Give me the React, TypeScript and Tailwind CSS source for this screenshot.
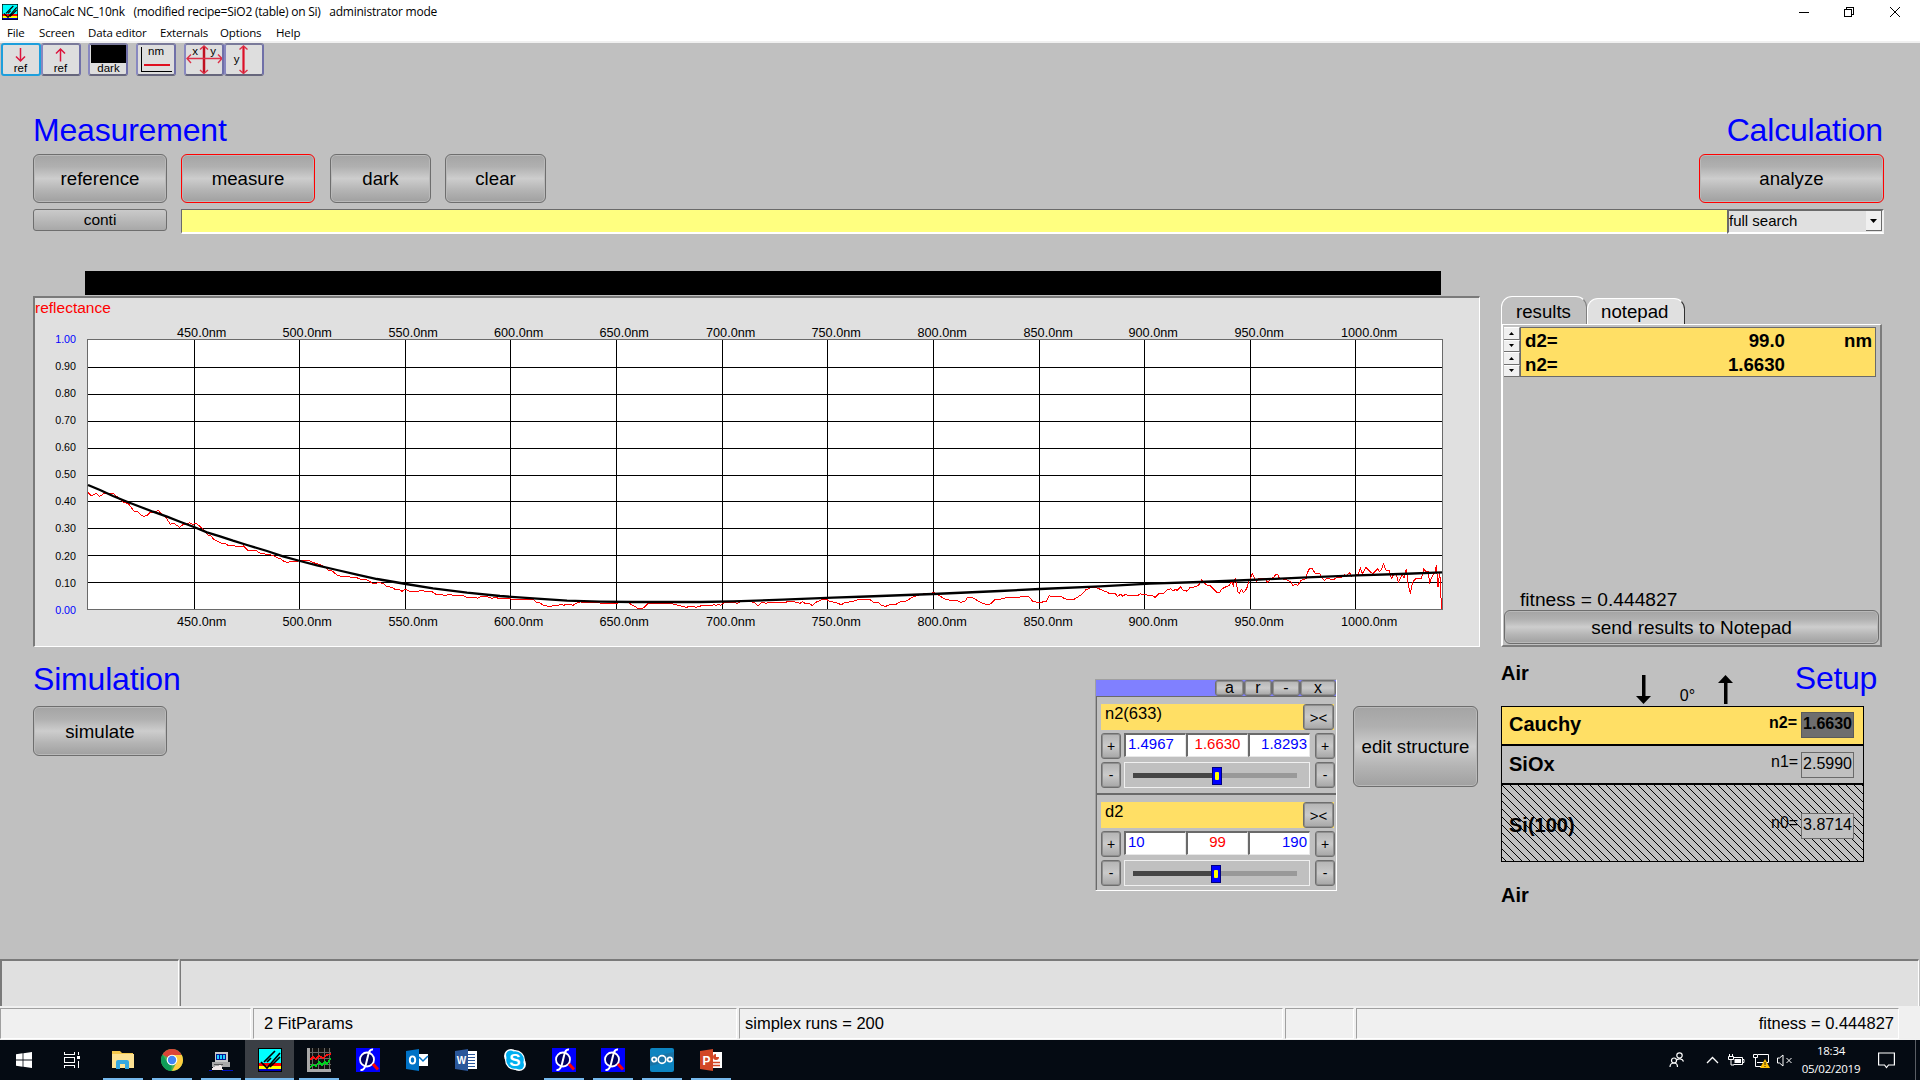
import React from "react";

const ARIAL = "font-['Liberation_Sans',Arial,sans-serif]";
const SEGOE = "font-['Open_Sans','Noto_Sans',sans-serif]";

type BtnProps = { children: React.ReactNode; className: string; red?: boolean };

/* Large beveled command button */
function Btn({ children, className, red }: BtnProps) {
  return (
    <button
      className={
        "flex shrink-0 items-center justify-center rounded-[6px] border bg-[linear-gradient(to_bottom,#a4a4a4_0%,#b0b0b0_25%,#cdcdcd_50%,#b4b4b4_75%,#a0a0a0_100%)] shadow-[inset_0_0_0_1px_#b9b9b9] whitespace-nowrap " +
        (red ? "border-[#ff0000] " : "border-[#6e6e6e] ") +
        className
      }
    >
      {children}
    </button>
  );
}

/* Small beveled button used in the parameter window */
function Mini({ children, className }: { children: React.ReactNode; className: string }) {
  return (
    <button
      className={
        "flex shrink-0 items-center justify-center rounded-[3px] border border-[#6e6e6e] bg-[linear-gradient(to_bottom,#b4b4b4,#cacaca_50%,#a6a6a6)] shadow-[inset_0_0_0_1px_#8f8f8f] leading-none " +
        className
      }
    >
      {children}
    </button>
  );
}

function AppGlyph({ size }: { size: number }) {
  return (
    <svg width={size} height={size} viewBox="0 0 24 24" className="shrink-0">
      <rect width="24" height="24" fill="#000" />
      <rect x="1" y="1" width="22" height="14" fill="#00ffff" />
      <rect x="1" y="15" width="22" height="3" fill="#ff0000" />
      <rect x="1" y="18" width="22" height="3" fill="#ffff00" />
      <rect x="1" y="21" width="22" height="2" fill="#0000c0" />
      <path d="M6 14L17 3M3 14L9 20L22 5M12 19L22 9M9 14L13 10" stroke="#000" strokeWidth="1.700" fill="none" />
    </svg>
  );
}

function ToolButton({ children, active, className = "" }: { children: React.ReactNode; active?: boolean; className?: string }) {
  return (
    <div
      className={
        "h-[33px] w-[40px] shrink-0 rounded-[3px] border-2 bg-[#dedede] " +
        (active ? "border-[#1e9fdc] " : "border-t-[#7a7a9a] border-l-[#8888c0] border-r-[#7070a8] border-b-[#66667c] ") +
        className
      }
    >
      <svg width="36" height="29" viewBox="0 0 36 29" className="block">
        {children}
      </svg>
    </div>
  );
}

const tinyText = "font-['Liberation_Sans',Arial,sans-serif] text-[11.5px]";

function Toolbar() {
  return (
    <div className="flex h-[33px] pl-px">
      <ToolButton active>
        <path d="M17.500 3V16M13 11.500L17.500 16L22 11.500" stroke="#dc143c" strokeWidth="1.500" fill="none" />
        <text x="17.500" y="27" textAnchor="middle" className={tinyText}>ref</text>
      </ToolButton>
      <ToolButton>
        <path d="M17.500 16.500V4M13 8.500L17.500 4L22 8.500" stroke="#dc143c" strokeWidth="1.500" fill="none" />
        <text x="17.500" y="27" textAnchor="middle" className={tinyText}>ref</text>
      </ToolButton>
      <ToolButton className="ml-[7px]">
        <rect x="1" y="0" width="35" height="18" fill="#000" />
        <text x="18.500" y="27" textAnchor="middle" className={tinyText}>dark</text>
      </ToolButton>
      <ToolButton className="ml-[8px]">
        <path d="M3.500 2V26.500H34" stroke="#000" fill="none" shapeRendering="crispEdges" />
        <path d="M6 20H32" stroke="#e01020" strokeWidth="2" />
        <text x="18" y="10" textAnchor="middle" className={tinyText}>nm</text>
      </ToolButton>
      <ToolButton className="ml-[8px]">
        <path d="M18 2V28" stroke="#c01020" strokeWidth="2.500" />
        <path d="M1 13.500H36M5 9.500L1 13.500L5 18M32 9.500L36 13.500L32 18M14 4.500L18 1L22 4.500M14 25L18 28.500L22 25" stroke="#dc3048" strokeWidth="1.400" fill="none" />
        <text x="9" y="10" textAnchor="middle" className={tinyText}>x</text>
        <text x="27" y="10" textAnchor="middle" className={tinyText}>y</text>
      </ToolButton>
      <ToolButton>
        <path d="M17.500 2V28" stroke="#dc1028" strokeWidth="2.200" />
        <path d="M13.500 4.500L17.500 1L21.500 4.500M13.500 25L17.500 28.500L21.500 25" stroke="#dc3048" strokeWidth="1.400" fill="none" />
        <text x="10.500" y="18" textAnchor="middle" className={tinyText}>y</text>
      </ToolButton>
    </div>
  );
}

const gridX = [194, 299, 405, 510, 616, 722, 827, 933, 1039, 1144, 1250, 1355];
const labelX = [177, 282.5, 388.5, 494, 599.5, 706, 811.5, 917.5, 1023.5, 1128.5, 1234.5, 1341];
const gridY = [367, 394, 421, 448, 475, 501, 528, 555, 582];
const yLabels = ["1.00", "0.90", "0.80", "0.70", "0.60", "0.50", "0.40", "0.30", "0.20", "0.10", "0.00"];

const fitCurve =
  "88,485 100,490 113,496 127,501.700 140,506.700 153,511.700 167,516.700 180,521.700 194,527 207,532.300 220,536.300 233,540.700 247,545 267,551 283,556.300 300,561 317,565.300 337,570 357,574.700 377,579 406,584 433,588.300 467,592.700 500,596 537,598.700 567,600.600 600,601.600 633,602 700,602 733,601.300 783,599.700 833,597.700 867,596.500 933,594 1000,591 1040,589 1100,586.300 1150,583.700 1200,582 1250,580 1307,577.300 1357,575.300 1400,574 1442,572.300";

/* Measured reflectance, three sections in a third-of-a-pixel raster */
const rawA =
  "264,727 274,737 289,730 299,739 313,730 340,730 352,741 370,757 384,760 402,783 414,786 424,796 433,799 442,796 450,788 466,786 475,781 482,790 499,804 511,823 521,820 529,825 539,832 550,823 560,823 569,818 577,823 590,821 604,833 615,843 624,855 632,857 642,869 654,875 666,880 676,881 684,886 698,886 708,889 722,891 730,888 742,900 770,903 781,910 803,913 818,916 832,923 843,927 852,934 862,937 875,934 890,934 905,931 925,931 940,938 960,944 975,952 986,961 997,963 1011,975 1024,979 1050,981 1070,983 1083,988 1102,990 1116,999 1127,1001 1137,997 1150,1001 1160,1009 1175,1012 1185,1018 1198,1018 1206,1024 1216,1018 1228,1024 1255,1024 1263,1021 1278,1024 1295,1024 1308,1033 1338,1036 1350,1033 1360,1036 1389,1036 1400,1042 1425,1042 1433,1045 1443,1040 1459,1039 1477,1045 1485,1042 1500,1046";
const rawB =
  "0,476 30,476 42,479 60,477 75,478 101,479 111,488 120,489 131,496 150,500 163,496 175,496 182,493 191,496 198,493 210,493 219,496 228,490 240,486 285,487 306,490 350,490 366,487 385,488 395,494 412,504 427,506 434,501 446,489 458,491 464,489 495,490 520,492 535,496 548,499 560,502 568,499 580,500 588,502 605,497 635,497 642,493 648,497 655,493 661,496 672,488 686,486 700,487 711,490 720,486 755,486 765,489 774,497 783,489 791,487 798,490 808,487 857,487 866,483 893,487 900,490 907,485 915,490 930,492 938,497 947,487 966,479 980,478 990,485 1005,487 1024,494 1035,488 1060,484 1075,479 1109,478 1120,487 1134,487 1145,496 1157,499 1170,494 1187,494 1195,488 1207,484 1215,485 1235,473 1250,467 1275,461 1290,464 1300,457 1312,464 1326,472 1335,477 1352,481 1372,482 1383,487 1397,482 1402,472 1416,472 1435,483 1447,490 1465,494 1473,491 1485,479 1500,479";
const rawC =
  "0,478 14,474 38,472 85,470 92,475 98,485 106,486 122,487 139,484 148,467 153,470 185,470 192,475 202,478 222,478 232,472 244,464 258,449 273,443 284,442 296,446 314,454 322,456 327,460 346,461 352,469 362,463 368,469 376,463 385,466 414,466 421,461 428,464 436,463 447,467 456,466 465,472 476,461 492,460 500,450 512,446 520,453 526,448 531,451 542,440 550,452 557,450 560,454 570,443 580,442 595,437 606,419 614,430 622,436 632,438 645,451 650,457 660,457 664,448 672,443 688,436 695,424 700,436 706,413 710,437 714,456 718,460 724,448 731,458 740,446 747,424 757,401 763,414 770,423 776,416 797,417 803,428 812,415 820,413 828,403 834,405 838,415 858,419 873,425 878,436 887,433 894,436 902,422 918,416 922,398 928,387 936,385 945,399 960,402 963,412 973,421 980,416 1002,418 1012,412 1027,411 1033,403 1040,408 1048,398 1055,408 1075,403 1081,385 1088,402 1098,382 1107,392 1118,401 1133,386 1138,394 1145,389 1150,371 1158,390 1168,392 1174,416 1180,405 1188,400 1195,428 1200,417 1206,403 1212,414 1219,388 1224,430 1231,461 1238,427 1246,417 1264,416 1271,388 1277,394 1284,394 1289,428 1298,406 1306,395 1309,374 1314,440 1319,397 1322,440 1324,507";

function Chart() {
  return (
    <svg width="1444" height="348" viewBox="35 298 1444 348" className="block font-['Liberation_Sans',Arial,sans-serif]">
      <text x="35" y="312.500" fontSize="15.500" fill="#ff0000">reflectance</text>
      <rect x="88" y="340" width="1354" height="269" fill="#fff" />
      <g stroke="#000" strokeWidth="1" shapeRendering="crispEdges">
        {gridX.map((x) => <line key={x} x1={x + 0.5} x2={x + 0.5} y1="340" y2="609" />)}
        {gridY.map((y) => <line key={y} x1="88" x2="1442" y1={y + 0.5} y2={y + 0.5} />)}
      </g>
      <rect x="87.500" y="339.500" width="1355" height="270" fill="none" stroke="#6a6a6a" shapeRendering="crispEdges" />
      <g fill="none" stroke="#ff0000" strokeWidth="1" shapeRendering="crispEdges">
        <g transform="translate(0 250) scale(0.33333)"><polyline points={rawA} vectorEffect="non-scaling-stroke" /></g>
        <g transform="translate(500 440) scale(0.33333)"><polyline points={rawB} vectorEffect="non-scaling-stroke" /></g>
        <g transform="translate(1000 440) scale(0.33333)"><polyline points={rawC} vectorEffect="non-scaling-stroke" /></g>
      </g>
      <polyline points={fitCurve} fill="none" stroke="#000" strokeWidth="2.300" />
      {yLabels.map((l, i) => (
        <text key={l} x="76" y={343 + i * 27.07} fontSize="10.700" textAnchor="end" fill={i === 0 || i === 10 ? "#0000ff" : "#000"}>{l}</text>
      ))}
      {labelX.map((x, i) => (
        <g key={x} fontSize="12.700" fill="#000">
          <text x={x} y="337">{450 + i * 50}.0nm</text>
          <text x={x} y="626">{450 + i * 50}.0nm</text>
        </g>
      ))}
    </svg>
  );
}

function SpinArrow({ up }: { up?: boolean }) {
  return (
    <div className="flex h-[12.5px] w-[16px] items-center justify-center border-r border-b border-r-[#808080] border-b-[#707070] border-t border-t-white bg-[#f0f0f0]">
      <svg width="5" height="3" viewBox="0 0 5 3">
        <path d={up ? "M0 3L2.500 0L5 3Z" : "M0 0L2.500 3L5 0Z"} />
      </svg>
    </div>
  );
}

function ResultsPanel() {
  return (
    <div className="flex h-[351px] w-[381px] flex-col">
      <div className="flex h-[28px] items-end">
        <div className="h-[28px] w-[86px] rounded-t-[11px] border-t border-l border-r border-t-white border-l-white border-r-[#808080] pt-[4px] pl-[14px] text-[18.67px] leading-[22px]">results</div>
        <div className="h-[26px] w-[98px] rounded-t-[11px] border-t border-l border-r border-t-white border-l-white border-r-[#303030] bg-[#e0e0e0] pt-[2px] pl-[13px] text-[18.67px] leading-[22px]">notepad</div>
      </div>
      <div className="flex h-[323px] flex-col border-t border-l-2 border-r-2 border-b-2 border-t-white border-l-white border-r-[#7c7c7c] border-b-[#7c7c7c] pt-[2px] pl-px">
        <div className="flex">
          <div className="flex w-[16px] flex-col">
            <SpinArrow up /><SpinArrow /><SpinArrow up /><SpinArrow />
          </div>
          <div className="flex h-[50px] w-[356px] flex-col border border-[#6a6a6a] bg-[#ffdf65] pl-[4px] text-[18.67px] leading-[25px] font-bold">
            <div className="flex h-[24px]"><span className="w-[120px]">d2=</span><span className="w-[140px] text-right">99.0</span><span className="w-[87px] text-right">nm</span></div>
            <div className="flex h-[25px]"><span className="w-[120px]">n2=</span><span className="w-[140px] text-right">1.6630</span></div>
          </div>
        </div>
        <div className="mt-auto pl-[16px] text-[19.2px] leading-[21px]">fitness = 0.444827</div>
        <Btn className="mb-[1px] h-[34px] w-[375px] pt-[2px] text-[19px]">send results to Notepad</Btn>
      </div>
    </div>
  );
}

type ParamProps = { name: string; lo: string; mid: string; hi: string; thumb: string };

function Param({ name, lo, mid, hi, thumb }: ParamProps) {
  const field = "h-[24px] border-t-2 border-l-2 border-r border-b border-t-[#6a6a6a] border-l-[#6a6a6a] border-r-[#e8e8e8] border-b-[#e8e8e8] bg-white px-[2px] text-[15px] leading-[18px] ";
  return (
    <div className="flex flex-col pl-[4px]">
      <div className="flex h-[26px] w-[233px] bg-[#ffdf65] text-[16.5px]">
        <span className="w-[202px] pl-[4px] leading-[19px]">{name}</span>
        <Mini className="h-[26px] w-[31px] text-[15px]">&gt;&lt;</Mini>
      </div>
      <div className="mt-[3px] flex">
        <div className="flex w-[20px] flex-col gap-[3px]">
          <Mini className="h-[26px] w-[20px] text-[14px]">+</Mini>
          <Mini className="h-[26px] w-[20px] text-[14px]">-</Mini>
        </div>
        <div className="mx-[3px] flex w-[187px] flex-col">
          <div className="flex h-[24px]">
            <div className={field + "w-[62px] text-[#0000ff]"}>{lo}</div>
            <div className={field + "w-[62px] text-center text-[#ff0000]"}>{mid}</div>
            <div className={field + "w-[62px] text-right text-[#0000ff]"}>{hi}</div>
          </div>
          <div className="mt-[5px] flex h-[26px] w-[186px] items-center border border-[#f0f0f0] pt-px pl-[8px]">
            <div className={"h-[5px] bg-[#454545] " + thumb} />
            <div className="flex h-[18px] w-[10px] items-center justify-center border border-[#000080] bg-[#0000ff]">
              <div className="h-[8px] w-[4px] rounded-[1px] bg-[#ffff00]" />
            </div>
            <div className="mr-[12px] h-[5px] grow bg-[#999999]" />
          </div>
        </div>
        <div className="ml-px flex w-[20px] flex-col gap-[3px]">
          <Mini className="h-[26px] w-[20px] text-[14px]">+</Mini>
          <Mini className="h-[26px] w-[20px] text-[14px]">-</Mini>
        </div>
      </div>
    </div>
  );
}

function ParamWindow() {
  return (
    <div className="mt-[32px] flex h-[212px] w-[242px] flex-col border-t border-l border-r border-b border-t-[#a0a0a0] border-l-[#a0a0a0] border-r-white border-b-white">
      <div className="flex h-[16px] justify-end bg-[#8080ff] text-[16px]">
        <Mini className="h-[16px] w-[29px]">a</Mini>
        <Mini className="h-[16px] w-[28px]">r</Mini>
        <Mini className="h-[16px] w-[28px]">-</Mini>
        <Mini className="h-[16px] w-[36px]">x</Mini>
      </div>
      <div className="flex grow flex-col border-t border-l border-[#6a6a6a] pt-[7px]">
        <Param name="n2(633)" lo="1.4967" mid="1.6630" hi="1.8293" thumb="w-[79px]" />
        <div className="mt-[5px] mb-[7px] h-[2px] shrink-0 bg-[#6a6a6a]" />
        <Param name="d2" lo="10" mid="99" hi="190" thumb="w-[78px]" />
      </div>
    </div>
  );
}

function Setup() {
  return (
    <div className="mt-[12px] ml-[23px] flex w-[376px] flex-col">
      <div className="flex h-[46px] w-[376px]">
        <span className="w-[137px] pt-[3px] text-[20px] leading-[22px] font-bold">Air</span>
        <svg width="15" height="30" viewBox="0 0 15 30" className="mt-[16px] -ml-[2px] shrink-0">
          <path d="M6 0H9.500V21H15L7.500 29L0 21H6Z" />
        </svg>
        <span className="w-[67px] pt-[27px] pl-[6px] text-center text-[16px] leading-[20px]">0°</span>
        <svg width="15" height="30" viewBox="0 0 15 30" className="mt-[16px] shrink-0">
          <path d="M6 29H9.500V8H15L7.500 0L0 8H6Z" />
        </svg>
        <span className="ml-auto pt-px text-[32px] leading-[36px] tracking-[-0.3px] text-[#0000ff]">Setup</span>
      </div>
      <div className="mt-px flex w-[363px] flex-col border border-black">
        <div className="flex h-[39px] border-b-2 border-black bg-[#ffdf65] pl-[7px] font-bold">
          <span className="w-[260px] text-[20px] leading-[34px]">Cauchy</span>
          <span className="w-[32px] text-[16px] leading-[31px]">n2=</span>
          <span className="mt-[5px] h-[26px] w-[53px] border border-[#5a5a5a] bg-[#6e6e6e] text-center text-[16px] leading-[21px]">1.6630</span>
        </div>
        <div className="flex h-[39px] border-b-2 border-black pl-[7px]">
          <span className="w-[262px] text-[20px] leading-[36px] font-bold">SiOx</span>
          <span className="w-[30px] text-[16px] leading-[32px]">n1=</span>
          <span className="mt-[6px] h-[26px] w-[53px] border border-[#6a6a6a] text-center text-[16px] leading-[21px]">2.5990</span>
        </div>
        <div className="relative flex h-[76px] pl-[7px]">
          <svg width="361" height="76" className="absolute top-0 left-0" shapeRendering="crispEdges">
            <defs>
              <pattern id="hatch" width="8" height="8" patternUnits="userSpaceOnUse">
                <path d="M0 0H1V1H2V2H3V3H4V4H5V5H6V6H7V7H8V8H7V7H6V6H5V5H4V4H3V3H2V2H1V1H0Z" fill="#000" />
              </pattern>
            </defs>
            <rect width="361" height="76" fill="url(#hatch)" />
          </svg>
          <span className="relative w-[262px] pt-[28px] text-[20px] leading-[24px] font-bold">Si(100)</span>
          <span className="relative w-[30px] pt-[27px] text-[16px] leading-[22px]">n0=</span>
          <span className="relative mt-[28px] h-[26px] w-[53px] border border-[#6a6a6a] bg-[#c0c0c0] text-center text-[16px] leading-[21px]">3.8714</span>
        </div>
      </div>
      <span className="mt-[22px] text-[20px] leading-[22px] font-bold">Air</span>
    </div>
  );
}

function Phi() {
  return (
    <svg width="24" height="24" viewBox="0 0 24 24">
      <rect width="24" height="24" fill="#0000ff" />
      <circle cx="11" cy="11.500" r="7" fill="#000060" stroke="#fff" strokeWidth="1.800" />
      <path d="M17 1.500C14 1 13 3 12.200 7L10 16C9 20 8 22.500 4.500 22" stroke="#fff" strokeWidth="2" fill="none" />
      <path d="M17 16L22 21.500" stroke="#ff0000" strokeWidth="3" />
    </svg>
  );
}

const Explorer = () => (
  <svg width="24" height="24" viewBox="0 0 24 24">
    <path d="M1 3H9L11 5H22V20H1Z" fill="#f5c84c" />
    <path d="M1 6H23V20H1Z" fill="#fde293" />
    <path d="M5 21V14Q5 12 7 12H16Q18 12 18 14V21H14V16H9V21Z" fill="#35a8e0" />
  </svg>
);
const Chrome = () => (
  <svg width="24" height="24" viewBox="0 0 24 24">
    <circle cx="12" cy="12" r="11" fill="#4caf50" />
    <path d="M12 12L2.500 6.500A11 11 0 0 1 21.500 6.500Z" fill="#db4437" />
    <path d="M12 7H21.800A11 11 0 0 1 12 23L16.500 14.500Z" fill="#ffcd40" />
    <path d="M2.500 6.500L7.500 14.500L12 17L11 23A11 11 0 0 1 2.500 6.500Z" fill="#0f9d58" />
    <circle cx="12" cy="12" r="5.300" fill="#fff" /><circle cx="12" cy="12" r="4.200" fill="#4285f4" />
  </svg>
);
const Computer = () => (
  <svg width="24" height="24" viewBox="0 0 24 24" shapeRendering="crispEdges">
    <path d="M6 4H19V14H6Z" fill="#c8c8c8" /><path d="M7 6H17V12H7Z" fill="#001890" />
    <path d="M8 7H10V11H8ZM11 7H13V11H11ZM14 7H16V11H14Z" fill="#20d0ff" />
    <path d="M3 14H21V19H3Z" fill="#a8a8a8" /><path d="M5 16H14V17H5Z" fill="#555" />
    <path d="M4 19L12 17L14 22H3Z" fill="#f0e8e8" /><path d="M0 22H3V23H0ZM13 22H24V23H13Z" fill="#0010c0" />
  </svg>
);
const Graph = () => (
  <svg width="24" height="24" viewBox="0 0 24 24" shapeRendering="crispEdges">
    <rect width="24" height="24" fill="#101010" />
    <path d="M5.500 0V21M11.500 0V21M17.500 0V21M22.500 0V21M3 4.500H24M3 10.500H24M3 16.500H24" stroke="#666" />
    <path d="M0 0H3V21H24V24H0Z" fill="#a8a8a8" />
    <path d="M3 12L6 9L9 11L12 8L16 10L20 7L24 6" stroke="#ff1010" strokeWidth="1.500" fill="none" />
    <path d="M3 19L6 17L9 18L12 14L15 17L18 14L20 16L24 10" stroke="#00d020" strokeWidth="1.500" fill="none" />
  </svg>
);
const Outlook = () => (
  <svg width="24" height="24" viewBox="0 0 24 24">
    <path d="M12 6H23V18H12Z" fill="#fff" /><path d="M14 9L18 13L23 8" stroke="#0072c6" strokeWidth="1.500" fill="none" />
    <path d="M1 3L14 1V23L1 21Z" fill="#0072c6" />
    <ellipse cx="7.500" cy="12" rx="2.700" ry="3.600" stroke="#fff" strokeWidth="1.900" fill="none" />
  </svg>
);
const Word = () => (
  <svg width="24" height="24" viewBox="0 0 24 24">
    <path d="M12 3H23V21H12Z" fill="#fff" /><path d="M14 6.500H21M14 9.500H21M14 12.500H21M14 15.500H21M14 18.500H21" stroke="#2b579a" />
    <path d="M1 3L14 1V23L1 21Z" fill="#2b579a" />
    <text x="7.500" y="16" textAnchor="middle" fontSize="10" fontWeight="bold" fill="#fff" className="font-['Liberation_Sans',sans-serif]">W</text>
  </svg>
);
const Skype = () => (
  <svg width="24" height="24" viewBox="0 0 24 24">
    <circle cx="8" cy="8" r="7" fill="#fff" /><circle cx="16" cy="16" r="7" fill="#fff" />
    <circle cx="12" cy="12" r="10" fill="#fff" /><circle cx="12" cy="12" r="8.800" fill="#00aff0" />
    <circle cx="7.500" cy="7" r="4.500" fill="#00aff0" /><circle cx="16.500" cy="17" r="4.500" fill="#00aff0" />
    <text x="12" y="18" textAnchor="middle" fontSize="17" fontWeight="bold" fill="#fff" className="font-['Liberation_Sans',sans-serif]">S</text>
  </svg>
);
const Cloud = () => (
  <svg width="24" height="24" viewBox="0 0 24 24">
    <rect width="24" height="24" rx="2" fill="#0d84c0" /><path d="M0 9L24 4V12L0 18Z" fill="#1a73a5" />
    <g fill="none" stroke="#fff" strokeWidth="1.700"><circle cx="12" cy="11.500" r="3.800" /><circle cx="4.200" cy="11.500" r="2.200" /><circle cx="19.800" cy="11.500" r="2.200" /></g>
  </svg>
);
const Ppt = () => (
  <svg width="24" height="24" viewBox="0 0 24 24">
    <path d="M12 4H23V20H12Z" fill="#fff" /><path d="M14 14.500H21M14 17.500H21" stroke="#d24726" strokeWidth="1.300" />
    <path d="M17 6A3 3 0 1 0 20 9H17Z" fill="#d24726" /><path d="M1 3L14 1V23L1 21Z" fill="#d24726" />
    <text x="7.500" y="16.500" textAnchor="middle" fontSize="12" fontWeight="bold" fill="#fff" className="font-['Liberation_Sans',sans-serif]">P</text>
  </svg>
);

type Task = { icon: React.ReactNode; open?: boolean; active?: boolean };
const tasks: Task[] = [
  { icon: <Explorer />, open: true },
  { icon: <Chrome />, open: true },
  { icon: <Computer />, open: true },
  { icon: <AppGlyph size={24} />, active: true },
  { icon: <Graph />, open: true },
  { icon: <Phi /> },
  { icon: <Outlook /> },
  { icon: <Word /> },
  { icon: <Skype /> },
  { icon: <Phi />, open: true },
  { icon: <Phi />, open: true },
  { icon: <Cloud />, open: true },
  { icon: <Ppt />, open: true },
];

function Taskbar() {
  return (
    <div className={"flex h-[40px] items-stretch bg-[#050b13] text-white " + SEGOE}>
      <div className="flex w-[48px] items-center justify-center">
        <svg width="16" height="16" viewBox="0 0 16 16"><path fill="#fff" d="M0 2.200L6.600 1.300V7.600H0ZM7.400 1.200L16 0V7.600H7.400ZM0 8.400H6.600V14.700L0 13.800ZM7.400 8.400H16V16L7.400 14.800Z" /></svg>
      </div>
      <div className="flex w-[50px] items-center justify-center pr-[2px]">
        <svg width="16" height="16" viewBox="0 0 16 16" fill="none" stroke="#fff" shapeRendering="crispEdges">
          <path d="M0.500 0V2.500H10.500V0M0.500 16V13.500H10.500V16M0.500 5.500H10.500V10.500H0.500ZM14.500 0V3M14.500 9V16" /><path d="M13 4H16V7H13Z" fill="#fff" stroke="none" />
        </svg>
      </div>
      {tasks.map((t, i) => (
        <div key={i} className={"flex w-[49px] flex-col items-center " + (t.active ? "bg-[#3b3f45]" : "")}>
          <div className="flex h-[38px] items-center pt-[2px]">{t.icon}</div>
          <div className={"h-[2px] " + (t.active ? "w-[49px] bg-[#76b9ed]" : t.open ? "w-[40px] bg-[#76b9ed]" : "w-0")} />
        </div>
      ))}
      <div className="ml-auto flex items-center">
        <svg width="16" height="16" viewBox="0 0 16 16" fill="none" stroke="#fff" strokeWidth="1.200" className="mr-[21px]">
          <circle cx="10.500" cy="3.500" r="2.700" /><circle cx="5" cy="8.500" r="2.500" /><path d="M1 15C1 12.500 3 11 5 11S8.500 12.500 8.500 15M8 8C9 6.500 13.500 6 14.500 9.500" />
        </svg>
        <svg width="13" height="8" viewBox="0 0 13 8" fill="none" stroke="#fff" strokeWidth="1.300" className="mr-[9px]"><path d="M1 7L6.500 1.500L12 7" /></svg>
        <svg width="17" height="13" viewBox="0 0 17 13" fill="none" stroke="#fff" className="mr-[8px]">
          <path d="M5.500 3.500H14.500V10.500H5.500M14.500 5.500H16V8.500H14.500M1.500 0V3M4.500 0V3M0.500 2.500H5.500V5.500H0.500ZM3 6V11H6" /><path d="M6.500 5H13V9H6.500Z" fill="#fff" stroke="none" />
        </svg>
        <svg width="17" height="15" viewBox="0 0 17 15" fill="none" stroke="#fff" className="mr-[7px]">
          <path d="M5 1.500H15.500V9.500H4M0.500 1.500H4.500V4.500H0.500ZM2.500 5V13.500M2.500 13.500H8" /><path d="M12 6L17 15H7Z" fill="#ffc107" stroke="none" /><path d="M12 9V12M12 13V14" stroke="#222" />
        </svg>
        <svg width="16" height="13" viewBox="0 0 16 13" fill="none" stroke="#fff" className="mr-[7px]"><path d="M0.500 4H2.500L6 1V12L2.500 9H0.500ZM9.500 4L14.500 9M14.500 4L9.500 9" /></svg>
        <div className="flex w-[62px] flex-col items-center text-[11.5px] leading-[18px] tracking-[-0.25px]">
          <span>18:34</span><span>05/02/2019</span>
        </div>
        <svg width="17" height="17" viewBox="0 0 17 17" fill="none" stroke="#fff" strokeWidth="1.200" className="mr-[20px] ml-[16px]"><path d="M0.600 1H16.400V13H10.500L8.500 15.500L6.500 13H0.600Z" /></svg>
        <div className="mr-[4px] h-[40px] w-px bg-[#5a5e64]" />
      </div>
    </div>
  );
}

export default function App() {
  const pane = "h-[31px] shrink-0 border-t border-l border-r border-b border-t-[#a0a0a0] border-l-[#a0a0a0] border-r-white border-b-white text-[16.5px] leading-[28px] ";
  return (
    <div className={"flex h-[1080px] w-[1920px] flex-col overflow-hidden bg-[#c0c0c0] text-black " + ARIAL}>
      <div className={"flex h-[43px] flex-col border-b-2 border-[#f0f0f0] bg-white text-[12px] " + SEGOE}>
        <div className="flex h-[24px] items-center pl-[2px]">
          <AppGlyph size={16} />
          <span className="ml-[5px] tracking-[-0.24px] whitespace-pre">NanoCalc NC_10nk   (modified recipe=SiO2 (table) on Si)   administrator mode</span>
          <div className="ml-auto flex items-center pr-[19px]">
            <svg width="102" height="12" viewBox="0 0 102 12" fill="none" stroke="#000">
              <path d="M0 6.500H10" shapeRendering="crispEdges" />
              <path d="M45.500 3.500H52.500V10.500H45.500ZM47.500 3.500V1.500H54.500V8.500H52.500" shapeRendering="crispEdges" />
              <path d="M91 1L101 11M101 1L91 11" />
            </svg>
          </div>
        </div>
        <div className="flex h-[17px] items-center pl-[7px] text-[11.5px] tracking-[-0.15px]">
          <span className="w-[32px]">File</span><span className="w-[49px]">Screen</span><span className="w-[72px] whitespace-nowrap">Data editor</span>
          <span className="w-[60px]">Externals</span><span className="w-[56px]">Options</span><span>Help</span>
        </div>
      </div>
      <Toolbar />
      <div className="mt-[36px] flex h-[36px] justify-between pr-[37px] pl-[33px] text-[32px] leading-[36px] tracking-[-0.18px] text-[#0000ff]">
        <span>Measurement</span><span>Calculation</span>
      </div>
      <div className="mt-[6px] flex h-[49px] pr-[36px] pl-[33px] text-[18.67px]">
        <Btn className="h-[49px] w-[134px]">reference</Btn>
        <Btn red className="ml-[14px] h-[49px] w-[134px]">measure</Btn>
        <Btn className="ml-[15px] h-[49px] w-[101px]">dark</Btn>
        <Btn className="ml-[14px] h-[49px] w-[101px]">clear</Btn>
        <Btn red className="ml-auto h-[49px] w-[185px]">analyze</Btn>
      </div>
      <div className="mt-[6px] flex h-[25px] pr-[36px] pl-[33px]">
        <button className="h-[22px] w-[134px] rounded-[3px] border border-[#6e6e6e] bg-[linear-gradient(to_bottom,#cacaca,#a8a8a8)] text-[15.5px] leading-[20px]">conti</button>
        <div className="ml-[14px] h-[25px] w-[1546px] border-t border-l border-b-2 border-t-[#6a6a6a] border-l-[#6a6a6a] border-b-white bg-[#ffff80]" />
        <div className="flex h-[25px] grow border-t-2 border-l-2 border-r-2 border-b-2 border-t-[#6a6a6a] border-l-[#6a6a6a] border-r-[#f0f0f0] border-b-white bg-[#e0e0e0]">
          <span className="text-[15px] leading-[20px]">full search</span>
          <div className="ml-auto flex h-[20px] w-[16px] items-center justify-center border-r border-b border-[#6a6a6a] bg-[#f0f0f0]">
            <svg width="7" height="4" viewBox="0 0 7 4"><path d="M0 0H7L3.500 4Z" /></svg>
          </div>
        </div>
      </div>
      <div className="mt-[37px] ml-[85px] h-[24px] w-[1356px] bg-black" />
      <div className="mt-px flex h-[351px] pl-[33px]">
        <div className="h-[351px] w-[1447px] border-t-2 border-l-2 border-r border-b border-t-[#7a7a7a] border-l-[#7a7a7a] border-r-white border-b-white bg-[#e0e0e0]">
          <Chart />
        </div>
        <div className="ml-[21px]"><ResultsPanel /></div>
      </div>
      <div className="flex h-[312px] pl-[33px]">
        <div className="flex w-[1062px] flex-col">
          <span className="mt-[14px] text-[32px] leading-[36px] tracking-[-0.18px] text-[#0000ff]">Simulation</span>
          <Btn className="mt-[9px] h-[50px] w-[134px] pt-px text-[18.67px]">simulate</Btn>
        </div>
        <ParamWindow />
        <Btn className="mt-[59px] ml-[16px] h-[81px] w-[125px] text-[18.67px]">edit structure</Btn>
        <Setup />
      </div>
      <div className="flex h-[47px] gap-px">
        <div className="w-[179px] border-t-2 border-l-2 border-r border-t-[#7a7a7a] border-l-[#7a7a7a] border-r-white bg-[#e0e0e0]" />
        <div className="w-[1739px] border-t-2 border-l border-r border-t-[#7a7a7a] border-l-[#7a7a7a] border-r-white bg-[#e0e0e0]" />
      </div>
      <div className="flex h-[34px] bg-[#f0f0f0] pt-[2px]">
        <div className={pane + "w-[251px]"} />
        <div className={pane + "ml-[2px] w-[484px] pl-[10px]"}>2 FitParams</div>
        <div className={pane + "ml-[2px] w-[544px] pl-[5px]"}>simplex runs = 200</div>
        <div className={pane + "ml-[2px] w-[69px]"} />
        <div className={pane + "ml-[2px] w-[543px] pr-[4px] text-right"}>fitness = 0.444827</div>
      </div>
      <Taskbar />
    </div>
  );
}
